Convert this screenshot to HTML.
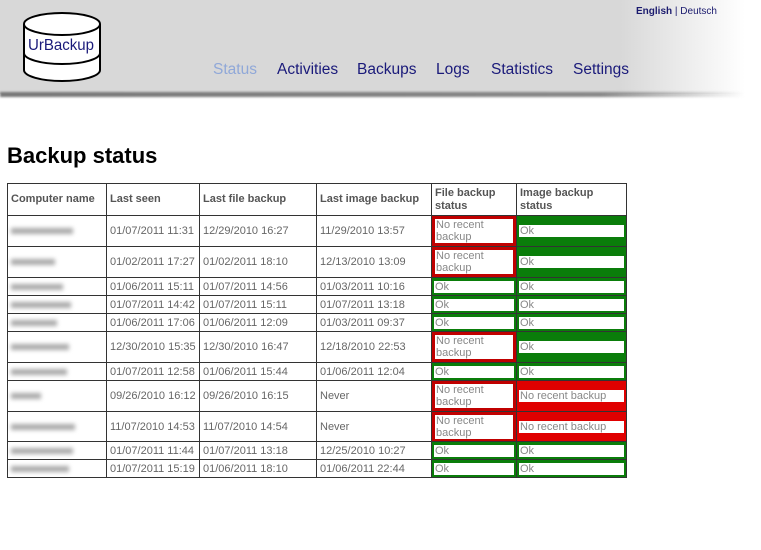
<!DOCTYPE html>
<html><head><style>
body{margin:0;width:761px;height:550px;background:#fff;font-family:"Liberation Sans",Arial,sans-serif;position:relative;overflow:hidden}
.hdr{position:absolute;left:0;top:0;width:761px;height:94px;background:linear-gradient(to right,#d8d8d8 0,#d8d8d8 620px,#fff 745px);}
.shadow{position:absolute;left:0;top:92px;width:745px;height:5px;background:linear-gradient(to right,#777 0,#888 600px,rgba(255,255,255,0) 745px);filter:blur(1px)}
.lang{position:absolute;left:636px;top:6px;font-size:10px;color:#1a1a6e}
.nav{position:absolute;top:61px;font-size:15.5px;color:#1a1a7a}
h1{position:absolute;left:7px;top:143px;margin:0;font-size:22px;font-weight:bold;color:#000}
table{position:absolute;left:7px;top:183px;border-collapse:collapse;table-layout:fixed;font-size:11px;color:#666}
td,th{border:1px solid #333;padding:0 3px;overflow:hidden;white-space:nowrap;line-height:12px}
th{text-align:left;font-weight:bold;color:#555;font-size:11px;line-height:13px}
td.s{padding:0;white-space:normal}
.g{background:#0a7d0a}.r{background:#e00000}.rr{background:#c00000}
.b{background:#fff;margin:2px;padding:0 1px;line-height:12px;color:#888}
.rr .b{margin:2px 3px;line-height:12px}
.nm{display:inline-block;height:6px;background:#aaa;filter:blur(2px);vertical-align:middle}
</style></head><body>
<div class="hdr"></div><div class="shadow"></div>
<svg style="position:absolute;left:22px;top:10px" width="80" height="74" viewBox="0 0 80 74">
<path d="M2 14 V60 A38 11 0 0 0 78 60 V14" fill="#fff" stroke="#000" stroke-width="2"/>
<ellipse cx="40" cy="14" rx="38" ry="11" fill="#fff" stroke="#000" stroke-width="2"/>
<path d="M2 43 A38 11 0 0 0 78 43" fill="none" stroke="#000" stroke-width="2"/>
<text x="6" y="40" font-family="Liberation Sans Narrow,Liberation Sans,sans-serif" font-size="16" fill="#1a1a7a" textLength="66" lengthAdjust="spacingAndGlyphs">UrBackup</text>
</svg>
<div class="lang"><b>English</b> | Deutsch</div>
<div class="nav" style="left:213px;color:#90a8d8">Status</div>
<div class="nav" style="left:277px">Activities</div>
<div class="nav" style="left:357px">Backups</div>
<div class="nav" style="left:436px">Logs</div>
<div class="nav" style="left:491px">Statistics</div>
<div class="nav" style="left:573px">Settings</div>
<h1>Backup status</h1>
<table>
<colgroup><col style="width:99px"><col style="width:93px"><col style="width:117px"><col style="width:115px"><col style="width:85px"><col style="width:110px"></colgroup>
<tr style="height:32px"><th>Computer name</th><th>Last seen</th><th>Last file backup</th><th>Last image backup</th><th style="white-space:normal">File backup status</th><th style="white-space:normal">Image backup status</th></tr>
<tr style="height:31px"><td><span class="nm" style="width:62px"></span></td><td>01/07/2011 11:31</td><td>12/29/2010 16:27</td><td>11/29/2010 13:57</td><td class="s rr"><div class="b">No recent backup</div></td><td class="s g"><div class="b">Ok</div></td></tr>
<tr style="height:31px"><td><span class="nm" style="width:44px"></span></td><td>01/02/2011 17:27</td><td>01/02/2011 18:10</td><td>12/13/2010 13:09</td><td class="s rr"><div class="b">No recent backup</div></td><td class="s g"><div class="b">Ok</div></td></tr>
<tr style="height:18px"><td><span class="nm" style="width:52px"></span></td><td>01/06/2011 15:11</td><td>01/07/2011 14:56</td><td>01/03/2011 10:16</td><td class="s g"><div class="b">Ok</div></td><td class="s g"><div class="b">Ok</div></td></tr>
<tr style="height:18px"><td><span class="nm" style="width:60px"></span></td><td>01/07/2011 14:42</td><td>01/07/2011 15:11</td><td>01/07/2011 13:18</td><td class="s g"><div class="b">Ok</div></td><td class="s g"><div class="b">Ok</div></td></tr>
<tr style="height:18px"><td><span class="nm" style="width:46px"></span></td><td>01/06/2011 17:06</td><td>01/06/2011 12:09</td><td>01/03/2011 09:37</td><td class="s g"><div class="b">Ok</div></td><td class="s g"><div class="b">Ok</div></td></tr>
<tr style="height:31px"><td><span class="nm" style="width:58px"></span></td><td>12/30/2010 15:35</td><td>12/30/2010 16:47</td><td>12/18/2010 22:53</td><td class="s rr"><div class="b">No recent backup</div></td><td class="s g"><div class="b">Ok</div></td></tr>
<tr style="height:18px"><td><span class="nm" style="width:56px"></span></td><td>01/07/2011 12:58</td><td>01/06/2011 15:44</td><td>01/06/2011 12:04</td><td class="s g"><div class="b">Ok</div></td><td class="s g"><div class="b">Ok</div></td></tr>
<tr style="height:31px"><td><span class="nm" style="width:30px"></span></td><td>09/26/2010 16:12</td><td>09/26/2010 16:15</td><td>Never</td><td class="s rr"><div class="b">No recent backup</div></td><td class="s r"><div class="b">No recent backup</div></td></tr>
<tr style="height:30px"><td><span class="nm" style="width:64px"></span></td><td>11/07/2010 14:53</td><td>11/07/2010 14:54</td><td>Never</td><td class="s rr"><div class="b">No recent backup</div></td><td class="s r"><div class="b">No recent backup</div></td></tr>
<tr style="height:18px"><td><span class="nm" style="width:62px"></span></td><td>01/07/2011 11:44</td><td>01/07/2011 13:18</td><td>12/25/2010 10:27</td><td class="s g"><div class="b">Ok</div></td><td class="s g"><div class="b">Ok</div></td></tr>
<tr style="height:18px"><td><span class="nm" style="width:58px"></span></td><td>01/07/2011 15:19</td><td>01/06/2011 18:10</td><td>01/06/2011 22:44</td><td class="s g"><div class="b">Ok</div></td><td class="s g"><div class="b">Ok</div></td></tr>
</table>
</body></html>
